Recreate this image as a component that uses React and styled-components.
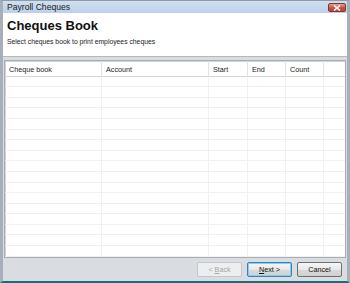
import React from 'react';
import styled, { createGlobalStyle } from 'styled-components';

const GlobalStyle = createGlobalStyle`
  html, body {
    margin: 0;
    padding: 0;
    overflow: hidden;
    background: #1f6b7c;
  }
`;

const Window = styled.div`
  width: 350px;
  height: 283px;
  box-sizing: border-box;
  display: flex;
  flex-direction: column;
  background: #d9dce0;
  border-left: 3px solid #a7b0ba;
  border-right: 3px solid #a7b0ba;
  border-top: 1px solid #8e9aa8;
  border-bottom: 2px solid #1f6b7c;
  font-family: 'Liberation Sans', Arial, sans-serif;
  color: #000;
`;

const TitleBar = styled.div`
  height: 12px;
  display: flex;
  align-items: center;
  justify-content: space-between;
  padding: 0 1px 0 4px;
  background: linear-gradient(#cfdff1, #bcd0e8);
  font-size: 8.6px;
  color: #1a1a1a;
`;

const CloseButton = styled.div`
  width: 18px;
  height: 9px;
  margin-top: 2px;
  display: flex;
  align-items: center;
  justify-content: center;
  border: 1px solid #7a3a32;
  border-radius: 2px;
  box-sizing: border-box;
  background: linear-gradient(#e8a091, #c9513f 55%, #c4432f);
`;

const Header = styled.div`
  height: 45px;
  box-sizing: border-box;
  padding: 5px 4px 0;
  background: #fff;
  border-bottom: 1px solid #b4b8bd;
`;

const Heading = styled.div`
  font-size: 13px;
  font-weight: bold;
  line-height: 16px;
  color: #111;
`;

const SubText = styled.div`
  margin-top: 4px;
  font-size: 6.8px;
  color: #222;
`;

const Body = styled.div`
  flex: 1;
  padding: 3px 1px 0 1px;
  display: flex;
  flex-direction: column;
`;

const Grid = styled.div`
  flex: 1;
  background: #fff;
  border: 1px solid #a9acb0;
  box-shadow: inset 1px 1px 0 #d0d3d6;
  overflow: hidden;
`;

const Row = styled.div`
  display: grid;
  grid-template-columns: 97px 107px 39px 38px 38px 1fr;
  height: ${(p) => (p.head ? '16px' : '10.6px')};
  border-bottom: 1px solid ${(p) => (p.head ? '#d5d5d5' : '#f1f1f1')};
  box-sizing: border-box;
`;

const Cell = styled.div`
  border-right: 1px solid ${(p) => (p.head ? '#e2e2e2' : '#f1f1f1')};
  padding: 0 0 0 4px;
  font-size: 7.2px;
  line-height: 17px;
  color: #222;
  white-space: nowrap;
  &:last-child {
    border-right: none;
  }
`;

const Footer = styled.div`
  height: 24px;
  display: flex;
  align-items: center;
  justify-content: flex-end;
  gap: 5px;
  padding: 0 5px 0 0;
`;

const Button = styled.div`
  width: 45px;
  height: 15px;
  box-sizing: border-box;
  display: flex;
  align-items: center;
  justify-content: center;
  border-radius: 2px;
  font-size: 7.2px;
  color: ${(p) => (p.disabled ? '#a6a6a6' : '#111')};
  border: 1px solid
    ${(p) => (p.disabled ? '#c3c6ca' : p.primary ? '#3d7fb8' : '#707070')};
  background: ${(p) =>
    p.disabled
      ? '#eceef0'
      : 'linear-gradient(#f6f6f6, #e8e8e8 50%, #dadada 51%, #d0d0d0)'};
  box-shadow: ${(p) => (p.primary ? 'inset 0 0 0 1px #7ed0f5' : 'none')};
  u {
    text-decoration: underline;
  }
`;

const columns = ['Cheque book', 'Account', 'Start', 'End', 'Count', ''];

export default function App() {
  const rows = Array.from({ length: 17 });
  return (
    <>
      <GlobalStyle />
      <Window>
        <TitleBar>
          <span>Payroll Cheques</span>
          <CloseButton>
            <svg width="8" height="6" viewBox="0 0 8 6">
              <path d="M1 0.5 L7 5.5 M7 0.5 L1 5.5" stroke="#fff" strokeWidth="1.6" />
            </svg>
          </CloseButton>
        </TitleBar>
        <Header>
          <Heading>Cheques Book</Heading>
          <SubText>Select cheques book to print employees cheques</SubText>
        </Header>
        <Body>
          <Grid>
            <Row head>
              {columns.map((c, i) => (
                <Cell head key={i}>
                  {c}
                </Cell>
              ))}
            </Row>
            {rows.map((_, r) => (
              <Row key={r}>
                {columns.map((c, i) => (
                  <Cell key={i} />
                ))}
              </Row>
            ))}
          </Grid>
        </Body>
        <Footer>
          <Button disabled>
            &lt;&nbsp;<u>B</u>ack
          </Button>
          <Button primary>
            <u>N</u>ext&nbsp;&gt;
          </Button>
          <Button>Cancel</Button>
        </Footer>
      </Window>
    </>
  );
}
